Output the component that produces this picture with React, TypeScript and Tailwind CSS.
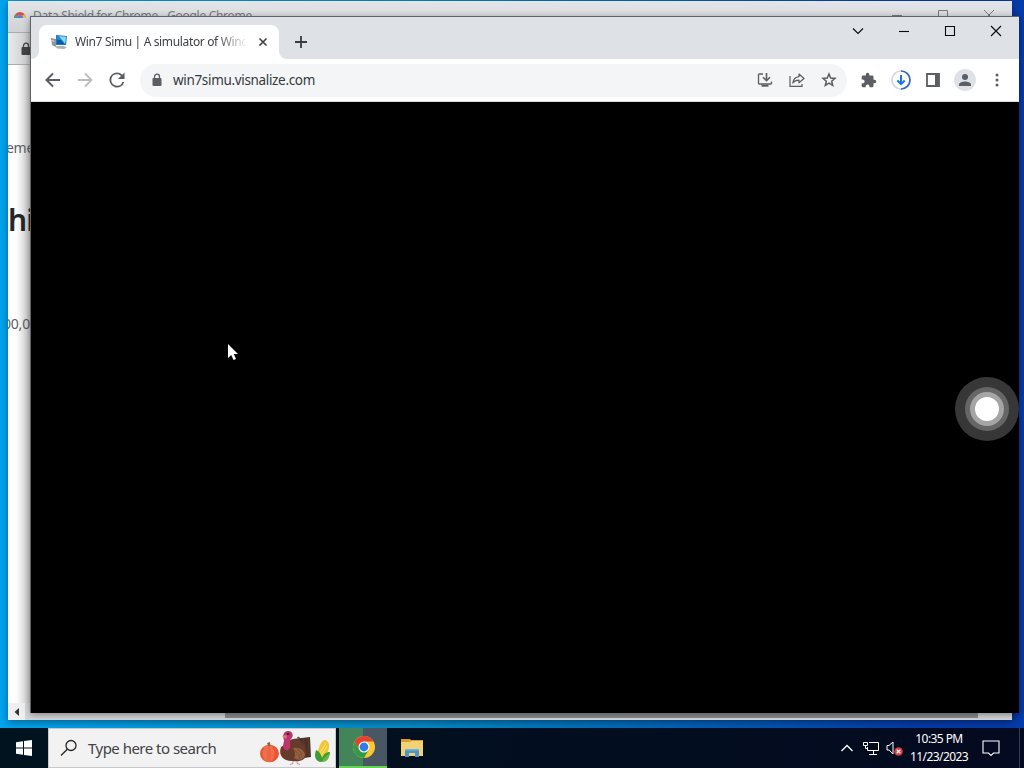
import type { ReactNode } from "react";

function Cell({ children, className = "" }: { children: ReactNode; className?: string }) {
  return <div className={`flex h-8 w-8 shrink-0 items-center justify-center ${className}`}>{children}</div>;
}

function LockIcon({ className = "" }: { className?: string }) {
  return (
    <svg viewBox="0 0 10 14" className={`h-3.5 w-2.5 shrink-0 ${className}`} aria-hidden="true">
      <rect x="0.5" y="5" width="9" height="8" rx="1" fill="currentColor" />
      <path d="M2.500 6V3.700a2.500 2.500 0 0 1 5 0V6" fill="none" stroke="currentColor" strokeWidth="1.300" />
    </svg>
  );
}

function StoreIcon() {
  return (
    <svg viewBox="0 0 14 14" className="h-3.5 w-3.5">
      <path d="M1 8a6 6 0 0 1 12 0h-3a3 3 0 0 0-6 0z" fill="#dc4b43" />
      <path d="M1 8a6 6 0 0 1 1.500-3.800L5 7v1z" fill="#4da663" />
      <path d="M11.500 4.200A6 6 0 0 1 13 8h-3l-1-2z" fill="#efc149" />
      <path d="M4 8a3 3 0 0 1 6 0z" fill="#4b83d9" />
    </svg>
  );
}

function SimuIcon() {
  return (
    <svg viewBox="0 0 18 16" className="h-4 w-[18px] shrink-0">
      <path d="M0 4l5 1v8l-4-2z" fill="#8c969e" />
      <path d="M.6 6l3 .7v1l-3-.7z" fill="#d8dee2" />
      <path d="M5 1l11 1-1 9-10 0z" fill="#2878b4" />
      <path d="M6 2l9 .8-.9 7.700L6 10z" fill="#198cd3" />
      <path d="M8 2.200l7 .6-.8 7z" fill="#8bd9f0" />
      <path d="M6 6c4-1 6 1 7 4.200L6 10z" fill="#0b5ba9" />
      <path d="M4 12.200l8-.5 4 1.800-3 1.500-7-.5z" fill="#aab4ba" />
    </svg>
  );
}

function BackWindow() {
  return (
    <div className="absolute left-2 top-px flex h-[719px] w-[1004px] flex-col overflow-hidden bg-white shadow-[0_2px_8px_rgba(0,0,0,0.4)]">
      <div className="flex h-[31px] shrink-0 items-start bg-linear-to-b from-[#e4e5e8] to-[#cfd1d5] pl-[5px] pt-[7px]">
        <div className="mt-0.5">
          <StoreIcon />
        </div>
        <span className="ml-1.5 whitespace-nowrap text-[12px] leading-4 tracking-[-0.3px] text-[#77797d]">
          Data Shield for Chrome - Google Chrome
        </span>
        <div className="ml-auto flex text-[#77797d]">
          {["M3 7.500h10", "M3.500 2.500h9v9h-9z", "M3 2l10 10M13 2L3 12"].map((d) => (
            <div key={d} className="flex w-[46px] justify-center">
              <svg viewBox="0 0 16 16" className="h-4 w-4">
                <path d={d} fill="none" stroke="currentColor" />
              </svg>
            </div>
          ))}
        </div>
      </div>
      <div className="flex h-[33px] shrink-0 items-center border-y border-[#a8aaad] bg-linear-to-r from-[#e9eaec] to-[#c4c6c9] to-[24px] pl-[13px] text-[#444]">
        <LockIcon />
      </div>
      <div className="relative flex-1 bg-linear-to-r from-white from-[8px] to-[#c4c4c4] to-[23px] text-[#5b5d61]">
        <div className="absolute -left-0.5 top-[71px] text-[14px] leading-6 tracking-[-0.3px]">ement</div>
        <div className="absolute left-0 top-[135px] text-[30px] font-semibold leading-10 tracking-[-1px] text-[#252629]">
          hield
        </div>
        <div className="absolute -left-[5px] top-[247px] text-[14px] leading-6 tracking-[-0.2px]">00,000</div>
      </div>
      <div className="flex h-[17px] shrink-0 items-center bg-[#d8d9da] text-[#333]">
        <div className="flex h-full w-[17px] items-center justify-center bg-[#efefef]">
          <svg viewBox="0 0 8 8" className="h-2 w-2">
            <path d="M6 0v8L1.500 4z" fill="currentColor" />
          </svg>
        </div>
        <div className="mb-0.5 ml-[200px] h-[15px] w-[753px] bg-[#8f9092]" />
      </div>
    </div>
  );
}

function Tab() {
  return (
    <div className="relative ml-2 mt-2 flex h-[34px] w-[240px] items-center rounded-t-lg bg-white pl-3">
      <SimuIcon />
      <div className="ml-[6px] w-[171px] overflow-hidden whitespace-nowrap text-[12px] tracking-[-0.35px] text-[#3f4246] [mask-image:linear-gradient(to_right,black_142px,transparent_173px)]">
        Win7 Simu | A simulator of Windows 7
      </div>
      <svg viewBox="0 0 10 10" className="ml-3 h-2.5 w-2.5">
        <path d="M1.500 1.500l7 7M8.500 1.500l-7 7" stroke="#3c4043" strokeWidth="1.600" />
      </svg>
      <svg viewBox="0 0 8 8" className="absolute -left-2 bottom-0 h-2 w-2">
        <path d="M8 0v8H0a8 8 0 0 0 8-8" fill="#fff" />
      </svg>
      <svg viewBox="0 0 8 8" className="absolute -right-2 bottom-0 h-2 w-2">
        <path d="M0 0v8h8a8 8 0 0 1-8-8" fill="#fff" />
      </svg>
    </div>
  );
}

function CaptionButtons() {
  const glyphs = ["M3 5.500l5 5 5-5", "M3 8.500h10", "M3.500 3.500h9v9h-9z", "M3 3l10 10M13 3L3 13"];
  return (
    <div className="ml-auto flex h-7">
      {glyphs.map((d) => (
        <div key={d} className="flex w-[46px] items-center justify-center">
          <svg viewBox="0 0 16 16" className="h-4 w-4">
            <path d={d} fill="none" stroke="#08090a" strokeWidth="1.1" />
          </svg>
        </div>
      ))}
    </div>
  );
}

function Toolbar() {
  return (
    <div className="flex h-[42px] shrink-0 items-center bg-white px-1.5 text-[#5b5e62]">
      <Cell>
        <svg viewBox="0 0 16 16" className="h-4 w-4" fill="none" stroke="currentColor" strokeWidth="2">
          <path d="M15 8H2M8 1.500L1.500 8 8 14.500" />
        </svg>
      </Cell>
      <Cell className="text-[#babcbe]">
        <svg viewBox="0 0 16 16" className="h-4 w-4" fill="none" stroke="currentColor" strokeWidth="1.800">
          <path d="M1 8h13M8 1.500L14.500 8 8 14.500" />
        </svg>
      </Cell>
      <Cell>
        <svg viewBox="3.500 3.500 17 17" className="h-4 w-4">
          <path
            d="M17.650 6.350A7.958 7.958 0 0 0 12 4a8 8 0 1 0 7.730 10h-2.080A6 6 0 1 1 12 6c1.660 0 3.140.690 4.220 1.780L13 11h7V4z"
            fill="currentColor"
          />
        </svg>
      </Cell>
      <div className="ml-[7px] flex h-[33px] w-[707px] items-center rounded-full bg-[#f3f5f7] pl-3 pr-0.5">
        <LockIcon />
        <span className="ml-[11px] text-[13.5px] tracking-[-0.33px] text-[#36393d]">win7simu.visnalize.com</span>
        <div className="ml-auto flex">
          <Cell>
            <svg viewBox="0 0 16 16" className="h-4 w-4" fill="none" stroke="currentColor" strokeWidth="1.300">
              <path d="M6 2H2.200q-.7 0-.7.7v8.600q0 .7.7.7h11.600q.7 0 .7-.7V9.500" />
              <path d="M4.500 13.700h7" strokeWidth="2" />
              <path d="M9.500 1v7.500M6 5.200l3.500 3.500L13 5.200" strokeWidth="1.600" />
            </svg>
          </Cell>
          <Cell>
            <svg viewBox="0 0 16 16" className="h-4 w-4" fill="none" stroke="currentColor" strokeWidth="1.200">
              <path d="M1 4v10.400h12V12" />
              <path d="M10 2l5 4.500-5 4.300V8.200C7 8.200 5.200 9 3.800 11 4.300 7.500 6 5 10 4.600z" strokeLinejoin="round" />
            </svg>
          </Cell>
          <Cell>
            <svg viewBox="0 0 16 16" className="h-4 w-4" fill="none" stroke="currentColor" strokeWidth="1.500">
              <path d="M8 2l1.700 4 4.300.4-3.300 2.800 1 4.300L8 11.200l-3.700 2.300 1-4.300L2 6.400 6.300 6z" />
            </svg>
          </Cell>
        </div>
      </div>
      <div className="ml-auto flex">
        <Cell>
          <svg viewBox="1 0 23 23" className="h-4 w-4">
            <path
              d="M20.500 11H19V7a2 2 0 0 0-2-2h-4V3.500a2.500 2.500 0 0 0-5 0V5H4a2 2 0 0 0-2 2v3.800h1.500a2.700 2.700 0 0 1 0 5.400H2V20a2 2 0 0 0 2 2h3.800v-1.500a2.700 2.700 0 0 1 5.400 0V22H17a2 2 0 0 0 2-2v-4h1.500a2.500 2.500 0 0 0 0-5z"
              fill="currentColor"
            />
          </svg>
        </Cell>
        <Cell>
          <svg viewBox="0 0 20 20" className="h-5 w-5" fill="none" strokeWidth="1.700">
            <circle cx="10" cy="10" r="9" stroke="#d3d7df" />
            <path d="M10 1a9 9 0 0 1 0 18" stroke="#3367c8" />
            <path d="M10 5v9M6.300 10.500l3.700 3.700 3.700-3.700" stroke="#1a73e8" strokeWidth="2" />
          </svg>
        </Cell>
        <Cell>
          <svg viewBox="0 0 14 14" className="h-3.5 w-3.5">
            <path d="M1 1h12v12H1z" fill="none" stroke="currentColor" strokeWidth="1.800" />
            <path d="M9 1h4v12H9z" fill="currentColor" />
          </svg>
        </Cell>
        <Cell>
          <div className="flex h-[22px] w-[22px] items-center justify-center rounded-full bg-[#dee1e6]">
            <svg viewBox="0 0 12 12" className="h-3 w-3">
              <circle cx="6" cy="3" r="3" fill="currentColor" />
              <path d="M0 12v-1.500C0 8.500 3.500 7.500 6 7.500s6 1 6 3V12z" fill="currentColor" />
            </svg>
          </div>
        </Cell>
        <Cell>
          <svg viewBox="0 0 4 14" className="h-3.5 w-1" fill="currentColor">
            <circle cx="2" cy="2" r="1.500" />
            <circle cx="2" cy="7" r="1.500" />
            <circle cx="2" cy="12" r="1.500" />
          </svg>
        </Cell>
      </div>
    </div>
  );
}

function FrontWindow() {
  return (
    <div className="absolute left-[30px] top-4 flex h-[697px] w-[989px] flex-col border-l border-t border-[#606266] bg-black shadow-[0_2px_7px_rgba(0,0,0,0.4)]">
      <div className="flex h-[42px] shrink-0 bg-[#dee1e6]">
        <Tab />
        <svg viewBox="0 0 12 12" className="ml-4 mt-[19px] h-3 w-3">
          <path d="M6 0v12M0 6h12" stroke="#393c40" strokeWidth="1.800" />
        </svg>
        <CaptionButtons />
      </div>
      <Toolbar />
      <div className="h-px shrink-0 bg-[#d8dadd]" />
      <div className="flex-1 bg-black" />
    </div>
  );
}

function AssistiveButton() {
  return (
    <div className="absolute left-[955px] top-[377px] flex h-16 w-16 items-center justify-center rounded-full bg-[#373737]">
      <div className="flex h-11 w-11 items-center justify-center rounded-full bg-[#666]">
        <div className="flex h-[34px] w-[34px] items-center justify-center rounded-full bg-[#a5a5a5]">
          <div className="h-6 w-6 rounded-full bg-white" />
        </div>
      </div>
    </div>
  );
}

function Harvest() {
  return (
    <svg viewBox="0 0 72 36" className="h-9 w-[72px]">
      <ellipse cx="10.500" cy="23.500" rx="9.500" ry="8.800" fill="#e95535" />
      <ellipse cx="9.500" cy="23.500" rx="6" ry="8.500" fill="#f06f49" />
      <ellipse cx="10" cy="24" rx="2" ry="8" fill="#ec6442" />
      <path d="M9 16l-1-3 3-1 .5 4z" fill="#8e6740" />
      <path d="M34 9l17-2 1 20-14 2z" fill="#4d3026" />
      <path d="M38 8l2-1 3 18M44 8l3 17M49 8l1 18" stroke="#5e3b2e" fill="none" />
      <path d="M22 17c5-2 7-7 12-8 7-1 12 5 13 13 1 9-7 10-14 9-9 0-14-6-11-14z" fill="#673b2b" />
      <path d="M25 19c-2-3 0-6 0-9-2-5 0-9 4-9 5 0 6 5 3 8-2 2 0 5-1 9-2 3-4 3-6 1z" fill="#bd356d" />
      <path d="M28 5l-5 1 4 3z" fill="#e17783" />
      <circle cx="29" cy="4" r="1.300" fill="#3f2732" />
      <path d="M34 18c7-1 11 2 12 7-1 5-7 6-11 3 2-3 1-6-1-10z" fill="#94613f" />
      <path d="M34 19c4 3 6 5 7 10M38 19c3 2 5 5 5 8" stroke="#7b4a32" fill="none" />
      <path d="M34 31v2.500l-3 1M38 31v2.500l3 1" stroke="#d78ba8" fill="none" />
      <path d="M58 27c1-9 4-17 8-17 7 1 4 14-2 20z" fill="#f0c735" />
      <path d="M61 23l6-10M62 26l6-10" stroke="#fae576" fill="none" />
      <path d="M57 20c3 1 5 4 6 8 2-4 4-6 8-6-1 7-5 10-10 10-5-2-6-6-4-12z" fill="#3f9b38" />
      <path d="M63 32c1-4 4-6 8-9-1 6-3 9-8 9z" fill="#67b841" />
    </svg>
  );
}

function ChromeLogo() {
  return (
    <svg viewBox="0 0 24 24" className="ml-0.5 h-6 w-6">
      <circle cx="12" cy="12" r="11" fill="#fbc92d" />
      <path d="M2.500 6.500A11 11 0 0 1 21.500 6.500H12L7.200 14.700z" fill="#e34133" />
      <path d="M2.500 6.500A11 11 0 0 0 12 23l4.800-8.200-9.600-.2z" fill="#329b4b" />
      <circle cx="12" cy="12" r="5.500" fill="#fff" />
      <circle cx="12" cy="12" r="4.400" fill="#347de0" />
    </svg>
  );
}

function FolderIcon() {
  return (
    <svg viewBox="0 0 22 20" className="h-5 w-[22px]">
      <path d="M0 1h9l1 1h12v16H0z" fill="#d99d2c" />
      <path d="M0 4h9l1-1h12v15H0z" fill="#f2d276" />
      <path d="M4 19v-8h14v8h-4v-4H8v4z" fill="#4d95c8" />
      <path d="M4 11h14v1.500H4z" fill="#71b3de" />
    </svg>
  );
}

function Taskbar() {
  return (
    <div className="absolute bottom-0 left-0 flex h-10 w-full items-stretch bg-linear-to-r from-[#00131f] to-[#040a20] text-white">
      <div className="flex w-12 items-center justify-center">
        <svg viewBox="0 0 16 16" className="h-4 w-4" fill="#fff">
          <path d="M0 2.300L7 1.300v6.200H0zM8 1.100L16 0v7.500H8zM0 8.500h7v6.200l-7-1zM8 8.500h8V16l-8-1.100z" />
        </svg>
      </div>
      <div className="flex w-72 items-center border border-[#c5c9cc] bg-[#f2f2f3] pl-[11px]">
        <svg viewBox="0 0 18 18" className="h-[18px] w-[18px]" fill="none" stroke="#252628" strokeWidth="1.300">
          <circle cx="11" cy="6.500" r="5" />
          <path d="M7.300 10.200L1 16.500" />
        </svg>
        <span className="ml-2.5 whitespace-nowrap text-[15px] tracking-[-0.52px] text-[#414346]">Type here to search</span>
        <div className="ml-auto mr-1">
          <Harvest />
        </div>
      </div>
      <div className="ml-[3px] flex w-12 items-center justify-center border-b-2 border-[#64d354] bg-linear-to-r from-[#43845a] from-50% to-[#485763] to-50%">
        <ChromeLogo />
      </div>
      <div className="ml-px flex w-12 items-center justify-center">
        <FolderIcon />
      </div>
      <div className="ml-auto flex items-center">
        <svg viewBox="0 0 12 8" className="h-2 w-3" fill="none" stroke="#fff" strokeWidth="1.300">
          <path d="M.500 7L6 1.500 11.500 7" />
        </svg>
        <svg viewBox="0 0 17 15" className="ml-2.5 h-[15px] w-[17px]" fill="none" stroke="#fff">
          <path d="M6 1.500h9.500v8H4.500V6M10.500 9.500v4M6 13.500h8" />
          <path d="M.500 1.500h4v3h-4zM2.500 4.500v3h2" />
        </svg>
        <svg viewBox="0 0 17 16" className="ml-1.5 h-4 w-[17px]" fill="none">
          <path d="M1 5.500h2L7 2v12l-4-4H1z" stroke="#fff" />
          <circle cx="12.500" cy="11.500" r="4.300" fill="#d73b3e" />
          <path d="M10.700 9.700l3.600 3.600M14.300 9.700l-3.600 3.600" stroke="#fff" strokeWidth="1.300" />
        </svg>
        <div className="ml-1.5 w-[60px] whitespace-nowrap text-center text-[12px] leading-[18px] tracking-[-0.57px]">
          <div>10:35 PM</div>
          <div>11/23/2023</div>
        </div>
        <svg viewBox="0 0 18 18" className="ml-[13px] h-[18px] w-[18px]" fill="none" stroke="#fff" strokeWidth="1.100">
          <path d="M1 2h16v12h-5.500L9 16.500 6.500 14H1z" />
        </svg>
        <div className="ml-[19px] mr-1 h-10 w-px bg-[#303c56]" />
      </div>
    </div>
  );
}

export default function App() {
  return (
    <main className="relative h-[768px] w-[1024px] overflow-hidden bg-linear-to-r from-[#00a4ef] via-[#078bc7] via-40% to-[#063baa] to-90% font-['Noto_Sans','Open_Sans',sans-serif]">
      <BackWindow />
      <FrontWindow />
      <AssistiveButton />
      <svg viewBox="0 0 12 18" className="absolute left-[227px] top-[343px] h-[18px] w-3">
        <path d="M1 1v14l3.200-3 2.300 5 2.500-1-2.200-5H11z" fill="#fff" />
      </svg>
      <Taskbar />
    </main>
  );
}
